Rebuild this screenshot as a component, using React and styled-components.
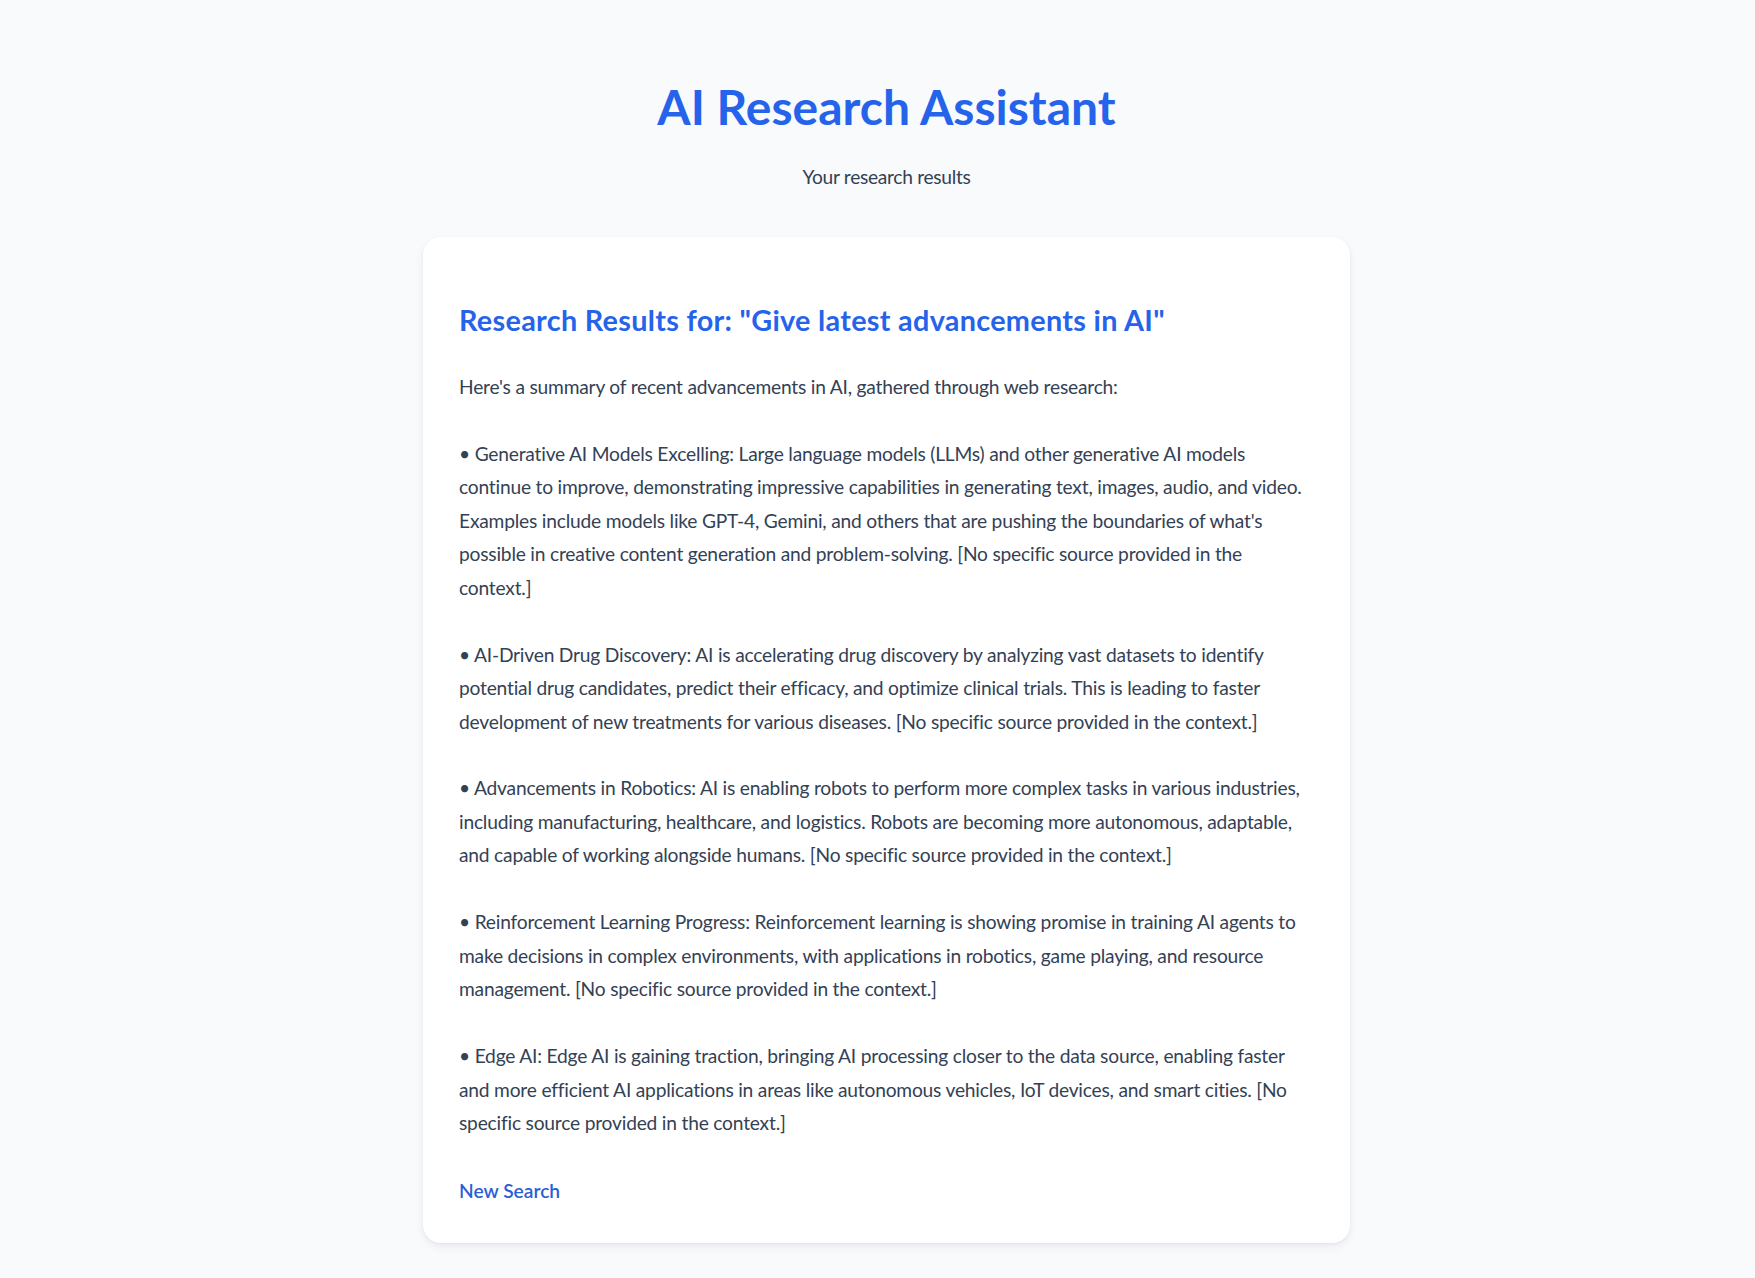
import styled, { createGlobalStyle } from 'styled-components';

const GlobalStyle = createGlobalStyle`
  * {
    box-sizing: border-box;
  }

  body {
    margin: 0;
    background-color: #f8fafc;
    font-family: 'Segoe UI', Lato, 'Noto Sans', sans-serif;
    color: #334155;
  }
`;

const Page = styled.main`
  min-height: 1278px;
  padding: 78px 24px 36px 42px;
  display: flex;
  flex-direction: column;
  align-items: center;
`;

const Header = styled.header`
  text-align: center;
  margin-bottom: 48px;
`;

const Title = styled.h1`
  margin: 0;
  font-size: 48px;
  line-height: 58px;
  font-weight: 700;
  color: #2563eb;
`;

const Subtitle = styled.p`
  margin: 29px 0 0;
  font-size: 19.2px;
  line-height: 24px;
  letter-spacing: -0.3px;
  color: #334155;
`;

const Card = styled.section`
  width: 927px;
  background-color: #fff;
  border-radius: 18px;
  padding: 65px 38px 40px 36px;
  box-shadow: 0 4px 10px rgba(15, 23, 42, 0.06), 0 1px 3px rgba(15, 23, 42, 0.05);
`;

const ResultsTitle = styled.h2`
  margin: 0 0 32px;
  font-size: 28.8px;
  line-height: 36px;
  font-weight: 700;
  letter-spacing: 0.3px;
  color: #2563eb;
`;

const ResultsBody = styled.div`
  white-space: pre-wrap;
  font-size: 19.2px;
  line-height: 33.45px;
  letter-spacing: -0.2px;
  color: #334155;
`;

const NewSearch = styled.button`
  margin-top: 40px;
  padding: 0;
  border: none;
  background: none;
  font-family: inherit;
  font-size: 19.2px;
  line-height: 24px;
  font-weight: 600;
  color: #2a5fd6;
  cursor: pointer;
`;

const query = 'Give latest advancements in AI';

const summary = `Here's a summary of recent advancements in AI, gathered through web research:

• Generative AI Models Excelling: Large language models (LLMs) and other generative AI models continue to improve, demonstrating impressive capabilities in generating text, images, audio, and video. Examples include models like GPT-4, Gemini, and others that are pushing the boundaries of what's possible in creative content generation and problem-solving. [No specific source provided in the context.]

• AI-Driven Drug Discovery: AI is accelerating drug discovery by analyzing vast datasets to identify potential drug candidates, predict their efficacy, and optimize clinical trials. This is leading to faster development of new treatments for various diseases. [No specific source provided in the context.]

• Advancements in Robotics: AI is enabling robots to perform more complex tasks in various industries, including manufacturing, healthcare, and logistics. Robots are becoming more autonomous, adaptable, and capable of working alongside humans. [No specific source provided in the context.]

• Reinforcement Learning Progress: Reinforcement learning is showing promise in training AI agents to make decisions in complex environments, with applications in robotics, game playing, and resource management. [No specific source provided in the context.]

• Edge AI: Edge AI is gaining traction, bringing AI processing closer to the data source, enabling faster and more efficient AI applications in areas like autonomous vehicles, IoT devices, and smart cities. [No specific source provided in the context.]`;

export default function App() {
  return (
    <>
      <GlobalStyle />
      <Page>
        <Header>
          <Title>AI Research Assistant</Title>
          <Subtitle>Your research results</Subtitle>
        </Header>
        <Card>
          <ResultsTitle>Research Results for: "{query}"</ResultsTitle>
          <ResultsBody>{summary}</ResultsBody>
          <NewSearch type="button">New Search</NewSearch>
        </Card>
      </Page>
    </>
  );
}
